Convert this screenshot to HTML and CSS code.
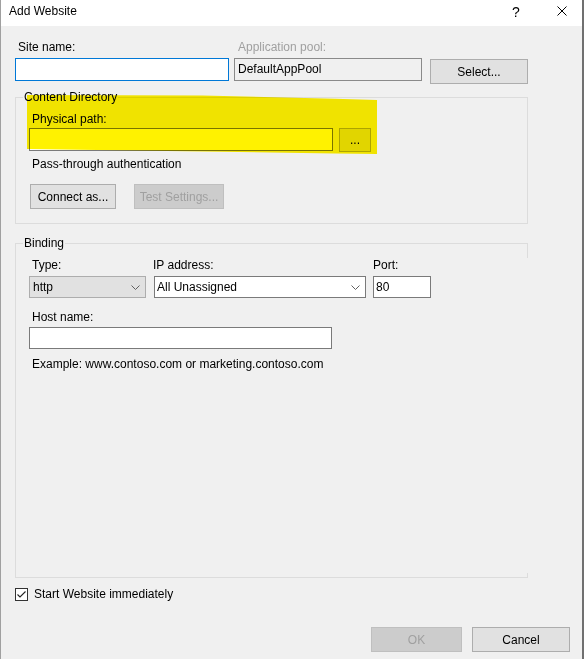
FILE: index.html
```html
<!DOCTYPE html>
<html lang="en">
  <head>
    <meta charset="UTF-8" />
    <title>Add Website</title>
    <link rel="stylesheet" href="styles.css">
  </head>
  <body>
    <div class="window">
      <div class="titlebar">
        <span class="title">Add Website</span>
        <div class="tb-buttons">
          <span class="tb-btn help">?</span>
          <span class="tb-btn">
            <svg width="10" height="10" viewBox="0 0 10 10"><path d="M0.5 0.5 L9.5 9.5 M9.5 0.5 L0.5 9.5" stroke="#000" stroke-width="1" fill="none"/></svg>
          </span>
        </div>
      </div>
      <div class="content">
        <div class="top-row">
          <div class="field site-field">
            <label>Site name:</label>
            <input type="text" class="textbox focused" />
          </div>
          <div class="field pool-field">
            <label class="disabled">Application pool:</label>
            <div class="textbox readonly">DefaultAppPool</div>
          </div>
          <button class="btn select-btn">Select...</button>
        </div>

        <!-- Content Directory -->
        <fieldset class="group content-dir">
          <legend>Content Directory</legend>
          <label class="lbl path-lbl">Physical path:</label>
          <div class="path-row">
            <input type="text" class="textbox path-input" />
            <button class="btn browse-btn">...</button>
          </div>
          <div class="lbl pass">Pass-through authentication</div>
          <div class="btn-row">
            <button class="btn connect-btn">Connect as...</button>
            <button class="btn test-btn" disabled>Test Settings...</button>
          </div>
        </fieldset>

        <!-- Binding -->
        <fieldset class="group binding">
          <legend>Binding</legend>
          <div class="binding-row">
            <div class="field type-field">
              <label>Type:</label>
              <div class="combo combo-gray">
                <span>http</span>
                <svg width="9" height="5" viewBox="0 0 9 5"><path d="M0.5 0.5 L4.5 4.5 L8.5 0.5" fill="none" stroke="#606060"/></svg>
              </div>
            </div>
            <div class="field ip-field">
              <label>IP address:</label>
              <div class="combo">
                <span>All Unassigned</span>
                <svg width="9" height="5" viewBox="0 0 9 5"><path d="M0.5 0.5 L4.5 4.5 L8.5 0.5" fill="none" stroke="#606060"/></svg>
              </div>
            </div>
            <div class="field port-field">
              <label>Port:</label>
              <input type="text" class="textbox port-input" value="80" />
            </div>
          </div>
          <label class="lbl host-lbl">Host name:</label>
          <input type="text" class="textbox host-input" />
          <div class="lbl example">Example: www.contoso.com or marketing.contoso.com</div>
        </fieldset>

        <label class="check-row">
          <span class="checkbox">
            <svg width="11" height="11" viewBox="0 0 11 11"><path d="M1.5 5.5 L4 8 L9.5 2.5" fill="none" stroke="#222" stroke-width="1.1"/></svg>
          </span>
          Start Website immediately
        </label>

        <div class="footer">
          <button class="btn ok-btn" disabled>OK</button>
          <button class="btn cancel-btn">Cancel</button>
        </div>

        <div class="marker"></div>
        <div class="stub"></div>
      </div>
    </div>
  </body>
</html>
```

FILE: styles.css
```css
* {
  box-sizing: border-box;
}
body {
  margin: 0;
  background: #fff;
  font-family: 'Liberation Sans', Arial, sans-serif;
  font-size: 12px;
  color: #000;
}
.window {
  display: flex;
  flex-direction: column;
  width: 584px;
  height: 659px;
  background: #f0f0f0;
  border-left: 1px solid #a0a0a0;
  border-right: 2px solid #707070;
}
/* title bar */
.titlebar {
  display: flex;
  align-items: flex-start;
  flex-shrink: 0;
  height: 26px;
  background: #fff;
}
.title {
  padding: 3px 0 0 8px;
  line-height: 16px;
}
.tb-buttons {
  display: flex;
  margin-left: auto;
  margin-right: -3px;
}
.tb-btn {
  display: flex;
  width: 46px;
  height: 22px;
  justify-content: center;
  align-items: center;
}
.tb-btn.help {
  font-size: 14px;
  padding-top: 1px;
}
/* body */
.content {
  position: relative;
  display: flex;
  flex: 1;
  flex-direction: column;
  padding: 13px 0 0 14px;
}
.top-row {
  display: flex;
  align-items: flex-start;
}
.field label {
  display: block;
  line-height: 16px;
  margin-bottom: 3px;
  padding-left: 3px;
}
.field label.disabled {
  color: #a0a0a0;
  padding-left: 4px;
}
.site-field {
  width: 214px;
}
.pool-field {
  width: 188px;
  margin-left: 5px;
}
.textbox {
  display: block;
  width: 100%;
  height: 23px;
  margin: 0;
  padding: 0 3px;
  border: 1px solid #7a7a7a;
  border-radius: 0;
  background: #fff;
  font: inherit;
  line-height: 21px;
  color: #000;
  outline: none;
}
.textbox.focused {
  border-color: #0078d7;
}
.textbox.readonly {
  background: #f0f0f0;
  border-color: #8a8a8a;
}
.btn {
  margin: 0;
  padding: 0;
  height: 25px;
  font: inherit;
  color: #000;
  background: #e1e1e1;
  border: 1px solid #adadad;
  border-radius: 0;
}
.btn:disabled {
  color: #a0a0a0;
  background: #cccccc;
  border-color: #bfbfbf;
}
.select-btn {
  width: 98px;
  margin: 20px 0 0 8px;
}
/* group boxes */
.group {
  width: 513px;
  min-width: 0;
  margin: 5px 0 0;
  padding: 0 0 0 13px;
  border: 1px solid #dcdcdc;
}
.group legend {
  margin-left: -6px;
  padding: 0 1px;
  line-height: 16px;
}
.lbl {
  display: block;
  line-height: 16px;
  padding-left: 3px;
}
.path-lbl {
  margin-top: 6px;
  margin-bottom: 1px;
}
.path-row {
  display: flex;
  align-items: flex-start;
}
.path-input {
  width: 304px;
}
.browse-btn {
  width: 32px;
  height: 24px;
  margin-left: 6px;
}
.pass {
  margin-top: 4px;
}
.btn-row {
  display: flex;
  margin: 12px 0 14px 1px;
}
.connect-btn {
  width: 86px;
}
.test-btn {
  width: 90px;
  margin-left: 18px;
}
.binding {
  position: relative;
  flex: 1;
  margin-top: 11px;
  border-right-color: transparent;
}
.binding::after {
  content: '';
  position: absolute;
  right: -1px;
  bottom: -1px;
  width: 1px;
  height: 5px;
  background: #dcdcdc;
}
.binding-row {
  display: flex;
  margin-top: 6px;
}
.type-field {
  width: 117px;
}
.ip-field {
  width: 212px;
  margin-left: 8px;
}
.ip-field label {
  margin-left: -1px;
  padding-left: 0;
}
.port-field {
  width: 58px;
  margin-left: 7px;
}
.port-field label {
  padding-left: 0;
}
.combo {
  display: flex;
  align-items: center;
  height: 22px;
  padding-left: 2px;
  border: 1px solid #7a7a7a;
  background: #fff;
}
.combo span {
  flex: 1;
}
.combo svg {
  margin-right: 5px;
}
.combo-gray {
  padding-left: 3px;
  background: #e1e1e1;
  border-color: #adadad;
}
.port-input {
  height: 22px;
  padding: 0 2px;
  line-height: 20px;
}
.host-lbl {
  margin-top: 11px;
  margin-bottom: 2px;
}
.host-input {
  width: 303px;
  height: 22px;
}
.example {
  margin-top: 7px;
}
/* bottom */
.check-row {
  display: flex;
  align-items: center;
  height: 16px;
  margin-top: 8px;
}
.checkbox {
  display: flex;
  width: 13px;
  height: 13px;
  margin-right: 6px;
  justify-content: center;
  align-items: center;
  background: #fff;
  border: 1px solid #333;
}
.footer {
  display: flex;
  justify-content: flex-end;
  margin-top: 25px;
  padding: 0 12px 7px 0;
}
.ok-btn {
  width: 91px;
}
.cancel-btn {
  width: 98px;
  margin-left: 10px;
}
/* marker highlight over the content directory */
.marker {
  position: absolute;
  left: 26px;
  top: 67px;
  width: 350px;
  height: 63px;
  background: #fff200;
  mix-blend-mode: multiply;
  clip-path: polygon(0 3%, 50% 4%, 88% 9%, 100% 11%, 100% 97%, 88% 96%, 40% 92%, 0 89%);
  pointer-events: none;
}
/* top end of the binding box right edge */
.stub {
  position: absolute;
  left: 526px;
  top: 217px;
  width: 1px;
  height: 15px;
  background: #dcdcdc;
}
```
